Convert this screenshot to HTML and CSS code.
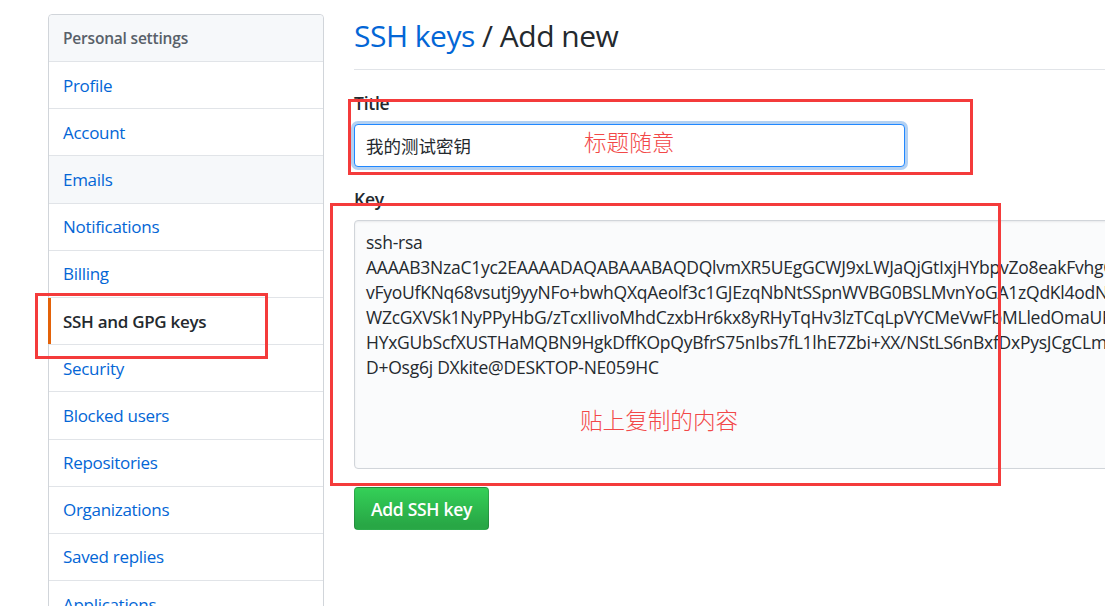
FILE: index.html
```html
<!DOCTYPE html>
<html lang="zh-CN">
<head>
<meta charset="utf-8">
<title>SSH keys / Add new</title>
<link rel="stylesheet" href="styles.css">
</head>
<body>
<div class="page">
  <nav class="menu">
    <div class="menu-heading">Personal settings</div>
    <a class="menu-item">Profile</a>
    <a class="menu-item">Account</a>
    <a class="menu-item hover">Emails</a>
    <a class="menu-item">Notifications</a>
    <a class="menu-item">Billing</a>
    <a class="menu-item selected">SSH and GPG keys</a>
    <a class="menu-item">Security</a>
    <a class="menu-item">Blocked users</a>
    <a class="menu-item">Repositories</a>
    <a class="menu-item">Organizations</a>
    <a class="menu-item">Saved replies</a>
    <a class="menu-item">Applications</a>
  </nav>
  <main class="main">
    <h2 class="subhead"><a class="crumb">SSH keys</a> / Add new</h2>
    <div class="form-group first">
      <label class="label">Title</label>
      <div class="input focus">我的测试密钥</div>
    </div>
    <div class="form-group">
      <label class="label">Key</label>
      <div class="textarea">
        <div>ssh-rsa</div>
        <div>AAAAB3NzaC1yc2EAAAADAQABAAABAQDQlvmXR5UEgGCWJ9xLWJaQjGtIxjHYbpvZo8eakFvhgC</div>
        <div>vFyoUfKNq68vsutj9yyNFo+bwhQXqAeolf3c1GJEzqNbNtSSpnWVBG0BSLMvnYoGA1zQdKl4odNW</div>
        <div>WZcGXVSk1NyPPyHbG/zTcxIIivoMhdCzxbHr6kx8yRHyTqHv3lzTCqLpVYCMeVwFbMLledOmaURE</div>
        <div>HYxGUbScfXUSTHaMQBN9HgkDffKOpQyBfrS75nIbs7fL1lhE7Zbi+XX/NStLS6nBxfDxPysJCgCLmSX</div>
        <div>D+Osg6j DXkite@DESKTOP-NE059HC</div>
      </div>
    </div>
    <button class="btn">Add SSH key</button>
  </main>

  <div class="mark mark-title"></div>
  <div class="mark mark-menu"></div>
  <div class="mark mark-key"></div>
  <div class="note note-title">标题随意</div>
  <div class="note note-key">贴上复制的内容</div>
</div>
</body>
</html>
```

FILE: styles.css
```css
html, body {
  margin: 0;
  padding: 0;
  width: 1105px;
  height: 606px;
  overflow: hidden;
  background: #fff;
}

body {
  font-family: "Open Sans", "Noto Sans CJK SC", sans-serif;
  font-size: 17.5px;
  letter-spacing: -0.25px;
  color: #24292e;
}

.page {
  position: relative;
  display: flex;
  align-items: flex-start;
  gap: 30px;
  padding: 14px 0 0 48px;
  width: 1105px;
  height: 606px;
  box-sizing: border-box;
  overflow: hidden;
}

.menu {
  flex: none;
  width: 276px;
  box-sizing: border-box;
  border: 1px solid #d1d5da;
  border-radius: 4px;
  display: flex;
  flex-direction: column;
}

.menu-heading {
  height: 46px;
  display: flex;
  align-items: center;
  padding: 0 14px;
  background: #f6f8fa;
  border-bottom: 1px solid #e1e4e8;
  border-radius: 4px 4px 0 0;
  font-weight: 600;
  color: #586069;
  font-size: 15.5px;
  letter-spacing: -0.2px;
}

.menu-item {
  position: relative;
  height: 46.2px;
  display: flex;
  align-items: center;
  padding: 0 14px;
  border-bottom: 1px solid #e1e4e8;
  color: #0366d6;
  text-decoration: none;
  font-size: 17px;
  letter-spacing: -0.3px;
}

.menu-item.hover {
  background: #f6f8fa;
}

.menu-item.selected {
  color: #24292e;
  font-weight: 600;
}

.menu-item.selected::before {
  content: "";
  position: absolute;
  left: -1px;
  top: 0;
  bottom: 0;
  width: 3px;
  background: #e36209;
}

.main {
  flex: 1;
  min-width: 0;
  display: flex;
  flex-direction: column;
  align-items: flex-start;
}

.subhead {
  align-self: stretch;
  margin: 0;
  font-size: 30px;
  font-weight: 400;
  line-height: 38px;
  letter-spacing: -0.5px;
  padding: 3px 0 14px 0;
  border-bottom: 1px solid #e1e4e8;
}

.crumb {
  color: #0366d6;
}

.form-group {
  display: flex;
  flex-direction: column;
  align-items: flex-start;
  margin-top: 21px;
  align-self: stretch;
}

.form-group + .form-group {
  margin-top: 20px;
}

.label {
  font-weight: 600;
  line-height: 25px;
  margin-bottom: 8px;
}

.input {
  width: 551px;
  height: 43px;
  box-sizing: border-box;
  border: 1px solid #d1d5da;
  border-radius: 4px;
  padding: 0 11px;
  display: flex;
  align-items: center;
  background: #fff;
  color: #24292e;
  letter-spacing: 0;
}

.input.focus {
  border-color: #2188ff;
  box-shadow: 0 0 0 3px rgba(3, 102, 214, 0.3);
}

.textarea {
  align-self: stretch;
  margin-right: -40px;
  height: 249px;
  box-sizing: border-box;
  border: 1px solid #d1d5da;
  border-radius: 4px;
  background: #fafbfc;
  box-shadow: inset 0 1px 2px rgba(27, 31, 35, 0.075);
  padding: 9px 11px;
  line-height: 25px;
  white-space: nowrap;
  overflow: hidden;
}

.btn {
  margin-top: 18px;
  height: 43px;
  padding: 0 16px;
  font-family: inherit;
  font-size: 17.5px;
  font-weight: 600;
  letter-spacing: -0.3px;
  color: #fff;
  border: 1px solid rgba(27, 31, 35, 0.2);
  border-radius: 4px;
  background: linear-gradient(180deg, #34d058, #28a745 90%);
}

.mark {
  position: absolute;
  border: 3px solid #f43b3b;
  box-sizing: border-box;
  pointer-events: none;
}

.mark-title { left: 348px; top: 99px; width: 625px; height: 76px; }
.mark-menu  { left: 35px;  top: 293px; width: 233px; height: 66px; }
.mark-key   { left: 330px; top: 203px; width: 671px; height: 283px; }

.note {
  position: absolute;
  font-family: "Noto Sans CJK SC", sans-serif;
  font-size: 22.6px;
  line-height: 30px;
  letter-spacing: 0;
  color: #f24848;
  font-weight: 300;
}

.note-title { left: 584px; top: 127px; }
.note-key   { left: 580px; top: 405px; }
```
